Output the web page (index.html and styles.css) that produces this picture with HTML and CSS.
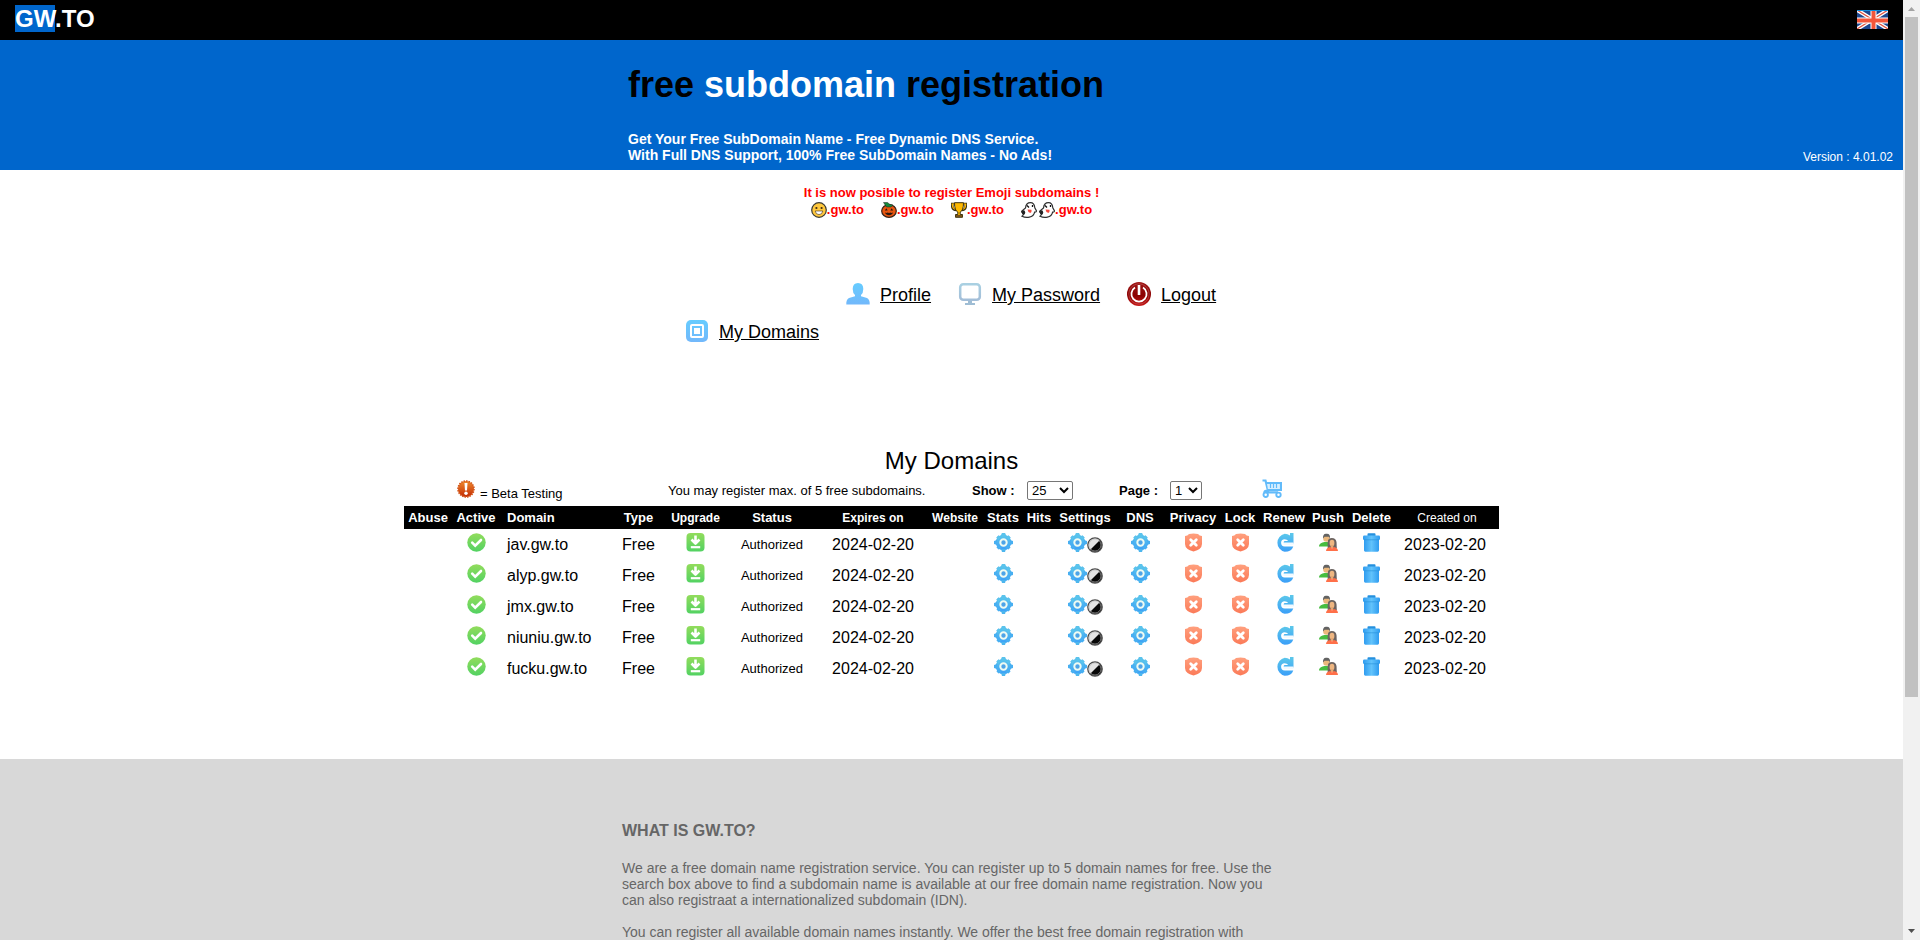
FILE: index.html
```html
<!DOCTYPE html>
<html lang="en">
<head>
<meta charset="utf-8">
<title>GW.TO - free subdomain registration</title>
<link rel="stylesheet" href="styles.css">
</head>
<body>
<svg class="sprite" aria-hidden="true">
  <defs>
    <linearGradient id="blue" x1="0" y1="0" x2="0" y2="1"><stop offset="0" stop-color="#5cc8ea"/><stop offset="1" stop-color="#3b9ff8"/></linearGradient>
    <linearGradient id="sky" x1="0" y1="0" x2="0" y2="1"><stop offset="0" stop-color="#66ccff"/><stop offset="1" stop-color="#72b8fb"/></linearGradient>
    <linearGradient id="green" x1="0" y1="0" x2="0" y2="1"><stop offset="0" stop-color="#92dc5c"/><stop offset="1" stop-color="#52d262"/></linearGradient>
    <linearGradient id="coral" x1="0" y1="0" x2="0" y2="1"><stop offset="0" stop-color="#ffa07e"/><stop offset="1" stop-color="#fb7a58"/></linearGradient>
    <linearGradient id="steel" x1="0" y1="0" x2="0" y2="1"><stop offset="0" stop-color="#a9d0e2"/><stop offset="1" stop-color="#a3bed8"/></linearGradient>
    <linearGradient id="orange" x1="0" y1="0" x2="0" y2="1"><stop offset="0" stop-color="#ef8a2c"/><stop offset="1" stop-color="#c22a04"/></linearGradient>
    <linearGradient id="bin" x1="0" y1="0" x2="1" y2="0"><stop offset="0" stop-color="#2f9cf0"/><stop offset=".5" stop-color="#62c3fb"/><stop offset="1" stop-color="#2f9cf0"/></linearGradient>
    <linearGradient id="red" x1="0" y1="0" x2="0" y2="1"><stop offset="0" stop-color="#a01818"/><stop offset=".55" stop-color="#8a0000"/><stop offset="1" stop-color="#c81818"/></linearGradient>
  </defs>
  <symbol id="check" viewBox="0 0 19 19"><circle cx="9.500" cy="9.500" r="9.200" fill="url(#green)"/><path d="M5.200 9.600l3 3 5.800-5.600" fill="none" stroke="#fff" stroke-width="2.600" stroke-linecap="round"/></symbol>
  <symbol id="upgrade" viewBox="0 0 19 19"><rect x=".5" y="0" width="18" height="18.500" rx="4" fill="url(#green)"/><path d="M9.500 2.500v8M5.500 6.500l4 4 4-4" fill="none" stroke="#fff" stroke-width="2.600" stroke-linejoin="round"/><path d="M4.800 14.200h9.400" stroke="#fff" stroke-width="2.200"/></symbol>
  <symbol id="gear" viewBox="0 0 19 19"><circle cx="9.500" cy="9.500" r="7.800" fill="url(#blue)"/><path d="M8 0h3l1 3H7zM8 19h3l1-3H7z" fill="#4db6ee"/><path d="M0 8v3l3 1V7zM19 8v3l-3 1V7zM2.500 4.500l2-2 3 1.500-3.500 3.500zM16.500 4.500l-2-2-3 1.500L15 7.500zM2.500 14.500l2 2 3-1.500L4 11.500zM16.500 14.500l-2 2-3-1.500 3.500-3.500z" fill="#48aff1"/><path d="M8 0h3l1 3H7zM2.500 4.500l2-2 3 1.500-3.500 3.500zM16.500 4.500l-2-2-3 1.500L15 7.500z" fill="#5ac3ec"/><circle cx="9.500" cy="9.500" r="3.200" fill="#4da4e8" stroke="#effbf2" stroke-width="2"/></symbol>
  <symbol id="contrast" viewBox="0 0 16 16"><circle cx="8" cy="8" r="7.200" fill="#e4e4e4"/><path d="M13 3A7 7 0 0 1 3 13z" fill="#080808"/><circle cx="8" cy="8" r="7.200" fill="none" stroke="#4b4b4b" stroke-width="1.300"/><circle cx="8" cy="8" r="6" fill="none" stroke="#bbb" stroke-width=".6"/></symbol>
  <symbol id="shield" viewBox="0 0 19 19"><path d="M5 1Q9.500-.1 14 1q1.400 1.800 4 2v8q-.2 5.500-8.500 7.500-8.300-2-8.500-7.500V3Q3.600 2.800 5 1z" fill="url(#coral)"/><path d="M6.700 6.700l5.600 5.600m0-5.600l-5.600 5.600" stroke="#fff" stroke-width="2.800" stroke-linecap="round"/></symbol>
  <symbol id="renew" viewBox="0 0 19 19"><path d="M18.500 0v10.500H10a1.300 1.300 0 0 1 0-2.600h3.200Q12 6.200 9.700 6.200a3.500 3.500 0 0 0 0 7.200h8.600Q16.500 18.800 9.700 18.800A9.200 9.200 0 0 1 9.700.8q3 0 5.300 1.700V0z" fill="url(#blue)"/><path d="M9.500 9.500h9v2.500h-9a1.200 1.200 0 0 1 0-2.500z" fill="#f2faff"/></symbol>
  <symbol id="push" viewBox="0 0 19 19"><path d="M0 12.500Q1 9.500 5.500 9h3q3 .6 4 3.500v1H0z" fill="#46bd40"/><circle cx="7.500" cy="5.500" r="3.300" fill="#eab77b"/><path d="M4 5.400Q3.700 0 8 .8q3.500.2 3 4.600L10 3.800H5.600z" fill="#626262"/><path d="M8.700 15V9q.3-4 4.200-4t4.600 4l.3 6z" fill="#6c6360"/><ellipse cx="13" cy="10" rx="2.400" ry="3.300" fill="#eeb681"/><path d="M11.700 12h2.600v3h-2.600z" fill="#e6a873"/><path d="M7 18q.2-3.500 4.300-4l1.700 1.400 1.800-1.400q4 .6 4.200 4z" fill="#ff7049"/></symbol>
  <symbol id="trash" viewBox="0 0 19 19"><path d="M5.500 3V1q0-.8.900-.8h6.200q.9 0 .9.800v2z" fill="#2590de"/><rect x="1" y="2.500" width="17" height="4.500" rx="1.200" fill="url(#bin)"/><path d="M2 6.300h15v11q0 1.400-1.400 1.400H3.400Q2 18.700 2 17.300z" fill="url(#bin)"/><path d="M2 6.800h15" stroke="#2c96dc" stroke-width=".7"/></symbol>
  <symbol id="user" viewBox="0 0 24 22"><path d="M12 0q5.300 0 5.300 6 0 4-2.300 6v1.300l6 1.700q3 1.500 2.700 6.500H.3Q0 16.500 3 15l6-1.700V12Q6.700 10 6.700 6q0-6 5.300-6z" fill="url(#sky)"/></symbol>
  <symbol id="screen" viewBox="0 0 24 22"><rect x="2.200" y="1.200" width="19.600" height="15.600" rx="3" fill="none" stroke="url(#steel)" stroke-width="2.500"/><path d="M10 17.800h4v2.200h3v2H7v-2h3z" fill="#9fbdd4"/></symbol>
  <symbol id="power" viewBox="0 0 24 24"><circle cx="12" cy="12" r="12" fill="url(#red)"/><circle cx="12" cy="12" r="10.200" fill="none" stroke="#c46a6a" stroke-width=".5"/><path d="M8 5.500a7.600 7.600 0 1 0 8 0" fill="none" stroke="#fff" stroke-width="1.800"/><path d="M12 3v10" stroke="#fff" stroke-width="2.600"/></symbol>
  <symbol id="square" viewBox="0 0 24 22"><rect x="1" y="0" width="22" height="22" rx="5" fill="url(#sky)"/><rect x="6" y="5" width="12" height="12" rx="1" fill="none" stroke="#fff" stroke-width="2"/><rect x="9" y="8" width="6" height="6" fill="#fff"/></symbol>
  <symbol id="beta" viewBox="0 0 18 18"><circle cx="9" cy="9" r="8" fill="url(#orange)" stroke="#d4581c" stroke-width="1.600" stroke-dasharray="1.500 1"/><path d="M7.500 3h3L10 10.500H8z" fill="#fff"/><circle cx="9" cy="13.200" r="1.700" fill="#fff"/></symbol>
  <symbol id="cart" viewBox="0 0 20 19"><path d="M.5 1.500h3L6 11.800H4q-1.500 0-1.500 1.500h13.500" fill="none" stroke="#62bbfa" stroke-width="2.200"/><path d="M5 4h14v7H6" fill="#d8f0ff" stroke="#62bbfa" stroke-width="2.200"/><path d="M8.500 4.500v4.500M11.500 4.500v4.500M14.500 4.500v4.500" stroke="#62bbfa" stroke-width="1.200"/><circle cx="3.700" cy="15.800" r="2.200" fill="#fff" stroke="#62bbfa" stroke-width="1.900"/><circle cx="16.500" cy="15.800" r="2.200" fill="#fff" stroke="#62bbfa" stroke-width="1.900"/></symbol>
  <symbol id="smile" viewBox="0 0 16 16"><circle cx="8" cy="8" r="7.300" fill="#ffc83d" stroke="#3b3a34" stroke-width="1.200"/><circle cx="5.400" cy="6" r="1.100" fill="#402a10"/><circle cx="10.600" cy="6" r="1.100" fill="#402a10"/><path d="M4.200 9h7.600q-.6 3.600-3.800 3.600T4.200 9z" fill="#fff" stroke="#402a10" stroke-width=".6"/></symbol>
  <symbol id="pumpkin" viewBox="0 0 16 16"><ellipse cx="8" cy="9" rx="7.300" ry="6.400" fill="#e8550f" stroke="#352117" stroke-width="1.200"/><path d="M2.500.5h4L9 2.500l3 .5-2 2H5.500z" fill="#16883a" stroke="#222" stroke-width=".5"/><path d="M3.800 8.400l1.600-2.200 1.300 2.200zM9.300 8.400l1.300-2.200 1.600 2.200zM4 10.500l1.500.6 1-.6 1.500.6 1.500-.6 1 .6 1.500-.6q-1 2.800-4 2.800t-4-2.800z" fill="#2b1710"/></symbol>
  <symbol id="trophy" viewBox="0 0 16 16"><path d="M3.500 2H1q0 6 4.500 6M12.500 2H15q0 6-4.500 6" fill="none" stroke="#3a3213" stroke-width="2.600"/><path d="M3.500 2.200H1.300q.2 5 4 5.200M12.500 2.200h2.200q-.2 5-4 5.200" fill="none" stroke="#ffb900" stroke-width="1.200"/><path d="M3.500.7h9q0 8-3.300 9.300v2.500h2.300v2.800h-7v-2.800h2.300V10Q3.500 8.700 3.500.7z" fill="#ffb900" stroke="#3a3213" stroke-width="1"/><path d="M4.700 13h6.600v2H4.700z" fill="#765016"/></symbol>
  <symbol id="ghost" viewBox="0 0 16 16"><path d="M4.500 6Q5 .7 9.500.7q3.700 0 4.300 5l1.600 3q.2 1.600-1.800 1.400-.8 4.200-5.200 5-4 .8-7.400-.9 1.700-.8 1.800-3.200Q.5 11 .6 9.300z" fill="#fff" stroke="#303030" stroke-width="1.200"/><ellipse cx="2.500" cy="10.500" rx="1.700" ry="2.200" fill="#222"/><path d="M6 3.500l2 2M11.500 3v2" stroke="#111" stroke-width="1.300"/><path d="M6.500 7.500l4 .2q.4 3.200-1.500 3.100-2-.2-2.500-3.300z" fill="#f5483c"/></symbol>
</svg>

<div class="page">
  <header class="topbar">
    <a class="logo" href="#"><span class="logo-mark">GW</span>.TO</a>
    <a class="flag-link" href="#" aria-label="English">
      <svg class="flag" viewBox="0 0 31 19"><path fill="#1c478f" d="M0 0h31v19H0z"/><path d="M0 0l31 19M31 0L0 19" stroke="#fff" stroke-width="4"/><path d="M0 0l31 19M31 0L0 19" stroke="#e0533e" stroke-width="1.200"/><path d="M16.500 0v19M0 10.500h31" stroke="#fff" stroke-width="6"/><path d="M16.500 0v19M0 10.500h31" stroke="#f3563a" stroke-width="4"/><path d="M0 0h31v1H0z" fill="#118edb"/></svg>
    </a>
  </header>

  <section class="hero">
    <div class="hero-text">
      <h1>free <span class="white">subdomain</span> registration</h1>
      <p class="tagline">Get Your Free SubDomain Name - Free Dynamic DNS Service.<br>With Full DNS Support, 100% Free SubDomain Names - No Ads!</p>
    </div>
    <p class="version">Version : 4.01.02</p>
  </section>

  <main class="main">
    <div class="notice">
      <p>It is now posible to register Emoji subdomains !</p>
      <p class="emoji-list">
        <span class="emoji-item"><svg class="emoji"><use href="#smile"/></svg>.gw.to</span>
        <span class="emoji-item"><svg class="emoji"><use href="#pumpkin"/></svg>.gw.to</span>
        <span class="emoji-item"><svg class="emoji"><use href="#trophy"/></svg>.gw.to</span>
        <span class="emoji-item"><svg class="emoji emoji-first"><use href="#ghost"/></svg><svg class="emoji"><use href="#ghost"/></svg>.gw.to</span>
      </p>
    </div>

    <nav class="menu">
      <div class="menu-row menu-account">
        <a href="#"><svg class="menu-icon"><use href="#user"/></svg><span>Profile</span></a>
        <a href="#"><svg class="menu-icon"><use href="#screen"/></svg><span>My Password</span></a>
        <a href="#"><svg class="menu-icon"><use href="#power"/></svg><span>Logout</span></a>
      </div>
      <div class="menu-row">
        <a href="#"><svg class="menu-icon"><use href="#square"/></svg><span>My Domains</span></a>
      </div>
    </nav>

    <section class="domains">
      <h2>My Domains</h2>
      <form class="controls">
        <span class="beta"><svg class="beta-icon"><use href="#beta"/></svg><span class="beta-text">= Beta Testing</span></span>
        <span class="limit">You may register max. of 5 free subdomains.</span>
        <label class="control" for="show">Show :</label>
        <select class="select-show" id="show"><option>25</option><option>50</option><option>100</option></select>
        <label class="control control-page" for="page">Page :</label>
        <select class="select-page" id="page"><option>1</option></select>
        <a class="cart" href="#" aria-label="Cart"><svg class="cart-icon"><use href="#cart"/></svg></a>
      </form>
      <table class="grid">
        <colgroup><col class="w48"><col class="w48"><col class="w110"><col class="w57"><col class="w57"><col class="w96"><col class="w106"><col class="w58"><col class="w38"><col class="w34"><col class="w58"><col class="w52"><col class="w54"><col class="w40"><col class="w48"><col class="w40"><col class="w47"><col class="w104"></colgroup>
        <thead>
          <tr><th>Abuse</th><th>Active</th><th class="name">Domain</th><th>Type</th><th class="small">Upgrade</th><th>Status</th><th class="small">Expires on</th><th class="small">Website</th><th>Stats</th><th>Hits</th><th>Settings</th><th>DNS</th><th>Privacy</th><th>Lock</th><th>Renew</th><th>Push</th><th>Delete</th><th class="light">Created on</th></tr>
        </thead>
        <tbody id="rows"></tbody>
      </table>
    </section>
  </main>

  <footer class="about">
    <div class="about-text">
      <h3>WHAT IS GW.TO?</h3>
      <p>We are a free domain name registration service. You can register up to 5 domain names for free. Use the search box above to find a subdomain name is available at our free domain name registration. Now you can also registraat a internationalized subdomain (IDN).</p>
      <p>You can register all available domain names instantly. We offer the best free domain registration with</p>
    </div>
  </footer>
</div>

<div class="scrollbar" aria-hidden="true">
  <svg class="arrow" viewBox="0 0 17 17"><path d="M5 11h7L8.500 7z" fill="#a3a3a3"/></svg>
  <div class="track"><div class="thumb"></div></div>
  <svg class="arrow" viewBox="0 0 17 17"><path d="M5 6h7l-3.500 4z" fill="#505050"/></svg>
</div>
<script src="domains.js"></script>
</body>
</html>
```
FILE: styles.css
```css
* { box-sizing: border-box; }
html, body { height: 100%; }
body {
  margin: 0;
  display: flex;
  overflow: hidden;
  background: #fff;
  color: #000;
  font-family: "Liberation Sans", Arial, sans-serif;
  font-size: 13px;
}
h1, h2, h3, p { margin: 0; }
a { color: inherit; }
.sprite { position: absolute; width: 0; height: 0; }

.page { flex: 1; min-width: 0; height: 100%; overflow: hidden; }

.topbar {
  display: flex;
  justify-content: space-between;
  align-items: flex-start;
  height: 40px;
  padding: 5px 15px;
  background: #000;
}
.logo { color: #fff; font-size: 24px; line-height: 27px; font-weight: bold; text-decoration: none; }
.logo-mark { background: #0066cc; }
.flag-link { padding-top: 5px; }
.flag { display: block; width: 31px; height: 19px; }

.hero {
  display: grid;
  grid-template-columns: 1fr 659px 1fr;
  align-items: end;
  height: 130px;
  padding-bottom: 7px;
  background: #0066cc;
}
.hero-text { grid-column: 2; padding-left: 6px; }
.hero h1 { font-size: 36px; line-height: 42px; margin-bottom: 25px; }
.white { color: #fff; }
.tagline { color: #fff; font-size: 14px; line-height: 16px; font-weight: bold; }
.version { color: #fff; font-size: 12px; line-height: 12px; padding-right: 10px; text-align: right; }

.main { display: flex; flex-direction: column; align-items: center; padding-bottom: 75px; }
.notice {
  margin-top: 14px;
  color: #f00;
  font-size: 13px;
  line-height: 17px;
  font-weight: bold;
  text-align: center;
}
.emoji-list { display: flex; justify-content: center; gap: 17px; }
.emoji-item { display: flex; align-items: center; }
.emoji { width: 16px; height: 16px; }
.emoji-first { margin-right: 2px; }

.menu { width: 533px; margin-top: 62px; font-size: 18px; line-height: 24px; }
.menu-row { display: flex; gap: 27px; height: 37px; }
.menu-account { padding-left: 161px; }
.menu a { display: flex; gap: 10px; align-items: flex-start; white-space: nowrap; }
.menu a span { padding-top: 3px; }
.menu-icon { width: 24px; height: 24px; margin-top: 2px; }

.domains { margin-top: 93px; }
.domains h2 { font-size: 24px; line-height: 28px; font-weight: normal; text-align: center; }
.controls { display: flex; align-items: center; height: 31px; padding-left: 53px; white-space: nowrap; }
.beta { display: flex; width: 211px; gap: 5px; }
.beta-icon { width: 18px; height: 18px; }
.beta-text { padding-top: 6px; }
.limit { width: 304px; }
.control { width: 55px; font-weight: bold; }
.control-page { width: 51px; margin-left: 46px; }
select {
  height: 19px;
  padding: 0;
  border: 1px solid #767676;
  border-radius: 2px;
  background: #fff;
  font-family: inherit;
  font-size: 13px;
}
.select-show { width: 46px; }
.select-page { width: 32px; }
.cart { margin-left: 60px; padding-bottom: 5px; }
.cart-icon { display: block; width: 20px; height: 19px; }

.grid { width: 1095px; table-layout: fixed; border-collapse: collapse; }
.w34 { width: 34px; }
.w38 { width: 38px; }
.w40 { width: 40px; }
.w47 { width: 47px; }
.w48 { width: 48px; }
.w52 { width: 52px; }
.w54 { width: 54px; }
.w57 { width: 57px; }
.w58 { width: 58px; }
.w96 { width: 96px; }
.w104 { width: 104px; }
.w106 { width: 106px; }
.w110 { width: 110px; }
.grid th { height: 23px; padding: 4px 0 0; vertical-align: baseline; background: #000; color: #fff; font-size: 13px; line-height: 15px; white-space: nowrap; }
.grid th.small { font-size: 12px; }
.grid th.light { font-size: 12px; font-weight: normal; }
.grid td { height: 31px; padding: 0; font-size: 16px; line-height: 18px; text-align: center; white-space: nowrap; }
.grid td:last-child { padding-right: 4px; }
.grid .name { padding-left: 7px; text-align: left; }
.grid td.state { font-size: 13px; }
.cell-icons { display: flex; justify-content: center; align-items: flex-start; height: 23px; }
.cell-icons a { display: block; }
.icon { display: block; width: 19px; height: 19px; }
.icon-contrast { width: 16px; height: 16px; margin-top: 4px; }

.about { min-height: 400px; padding-top: 63px; background: #d8d8d8; color: #666; }
.about-text { width: 659px; margin: 0 auto; }
.about h3 { font-size: 16px; line-height: 18px; margin-bottom: 20px; }
.about p { font-size: 14px; line-height: 16px; margin-bottom: 16px; }

.scrollbar { display: flex; flex-direction: column; width: 17px; height: 100%; background: #f1f1f1; }
.arrow { width: 17px; height: 17px; }
.track { flex: 1; padding: 0 2px; }
.thumb { height: 75%; background: #c1c1c1; }
```
FILE: domains.js
```js
const domains = ["jav.gw.to", "alyp.gw.to", "jmx.gw.to", "niuniu.gw.to", "fucku.gw.to"];

function icon(id, label) {
  const extra = id === "contrast" ? " icon-contrast" : "";
  return `<a href="#" aria-label="${label}"><svg class="icon${extra}"><use href="#${id}"/></svg></a>`;
}

function cell(content) {
  return `<td><div class="cell-icons">${content}</div></td>`;
}

document.getElementById("rows").innerHTML = domains.map(name => `<tr>
  <td></td>${cell(icon("check", "Active"))}
  <td class="name">${name}</td><td>Free</td>${cell(icon("upgrade", "Upgrade"))}
  <td class="state">Authorized</td><td>2024-02-20</td><td></td>
  ${cell(icon("gear", "Stats"))}<td></td>
  ${cell(icon("gear", "Settings") + icon("contrast", "Theme"))}
  ${cell(icon("gear", "DNS"))}${cell(icon("shield", "Privacy"))}${cell(icon("shield", "Lock"))}
  ${cell(icon("renew", "Renew"))}${cell(icon("push", "Push"))}${cell(icon("trash", "Delete"))}
  <td>2023-02-20</td></tr>`).join("");
```
